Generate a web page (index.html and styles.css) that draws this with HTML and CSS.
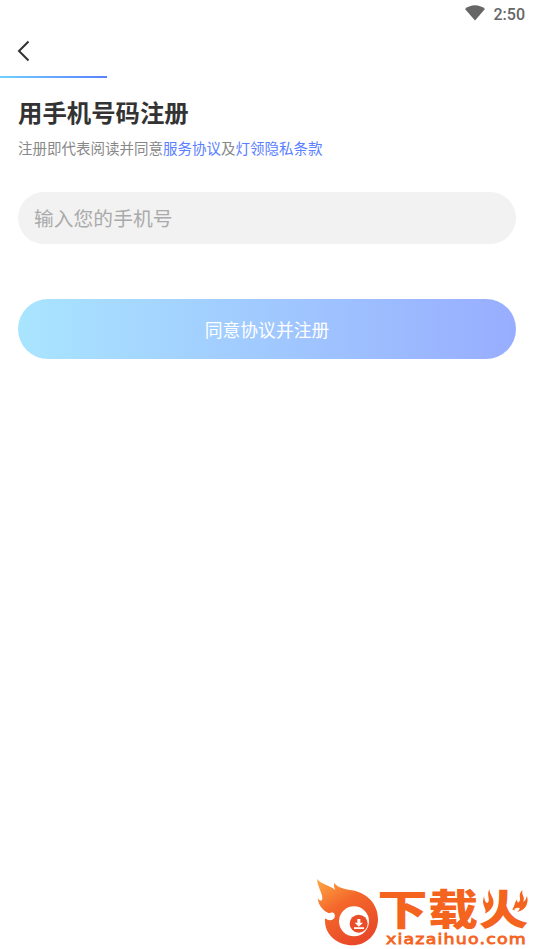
FILE: index.html
```html
<!DOCTYPE html>
<html lang="zh-CN">
<head>
    <meta charset="UTF-8">
    <meta name="viewport" content="width=device-width, initial-scale=1.0">
    <title>用手机号码注册</title>
    <link rel="stylesheet" href="styles.css">
</head>
<body>
    <div class="status-bar">
        <svg class="wifi" viewBox="0 0 20 16" width="20" height="16">
            <path d="M0 4 C6 -1 14 -1 20 4 L10 15.5 Z" fill="#666"/>
        </svg>
        <span class="time">2:50</span>
    </div>

    <nav>
        <a class="back" href="#" aria-label="返回">
            <svg viewBox="0 0 12 22" width="12" height="22">
                <path d="M11.500 1.500 L2 11 L11.500 20.500" fill="none" stroke="#333" stroke-width="2"/>
            </svg>
        </a>
    </nav>
    <div class="progress"></div>

    <main class="content">
        <h1>用手机号码注册</h1>
        <p class="terms">注册即代表阅读并同意<a href="#">服务协议</a>及<a href="#">灯领隐私条款</a></p>
        <form>
            <input type="tel" class="phone" placeholder="输入您的手机号">
            <button type="button" class="submit">同意协议并注册</button>
        </form>
    </main>

    <footer>
        <svg class="watermark" viewBox="0 0 224 79" width="224" height="79">
            <defs>
                <linearGradient id="flame" x1="0" y1="0" x2="0.55" y2="1">
                    <stop offset="0" stop-color="#fdaa45"/>
                    <stop offset="0.45" stop-color="#f4682b"/>
                    <stop offset="1" stop-color="#e94928"/>
                </linearGradient>
            </defs>
            <!-- fireball -->
            <g transform="scale(0.33333)">
                <path d="M21 27 C34 43 54 43 76 60 C72 52 71 46 73 38 C82 53 101 56 125 61 C176 69 204 107 204 147 C204 193 169 226 127 226 C83 226 46 196 45 154 C43 140 49 148 52 149 C66 154 79 145 73 132 C71 128 67 127 62 131 C45 127 25 110 23 84 C28 92 33 93 36 90 C42 76 23 55 21 27 Z" fill="url(#flame)"/>
                <path d="M44 136 C48 143 53 148 62 146 C68 145 73 140 73 133 C73 128 68 126 62 128 C53 130 47 131 44 136 Z" fill="#fff"/>
                <circle cx="132" cy="154" r="45" fill="#fff"/>
                <circle cx="146" cy="161" r="27" fill="#ea4e29"/>
                <path d="M142 147 H151 V158 H159 L146.500 170 L134 158 H142 Z M132 172 H162 V177 H132 Z" fill="#fff"/>
            </g>
            <text class="brand" transform="translate(67.500 54.700) scale(1 0.83)" textLength="151">下载火</text>
            <!-- flames on the last character -->
            <path d="M171 19 H187 V38 L183 44 H171 Z M203.500 19 H220 V43 H206 L203.500 37 Z" fill="#fff"/>
            <path d="M179.500 19 C179 24 184 27 183.500 33 C183 38 179 42 175 43.500 C177 39 173 37 173 31 L174 26 C174.500 30 175.500 33 177.500 33 C181 30 176 25 179.500 19 Z" fill="#f5641f"/>
            <path d="M212.500 20 C211 25 216 28 213 31.500 C216 31 216 28 217 26 C219 33 216 40 207 42 C211 39 210 37 207 38 L203 39 C205 34 205 32 207 29.500 C207 32 208 33 209 32 C212 29 207 25 212.500 20 Z" fill="#f5641f"/>
            <text class="domain" x="76" y="73.500" textLength="141" lengthAdjust="spacingAndGlyphs">xiazaihuo.com</text>
        </svg>
    </footer>
</body>
</html>
```

FILE: styles.css
```css
* {
    box-sizing: border-box;
}
body {
    font-family: "Noto Sans CJK SC", sans-serif;
    margin: 0;
    min-height: 949px;
    background-color: #fff;
    color: #333;
    display: flex;
    flex-direction: column;
}
.status-bar {
    height: 28px;
    padding-right: 9px;
    display: flex;
    align-items: center;
    justify-content: flex-end;
    gap: 9px;
}
.wifi {
    display: block;
    margin-bottom: 2px;
}
.time {
    font-family: Roboto, sans-serif;
    font-size: 16px;
    font-weight: 500;
    line-height: 26px;
    padding-top: 2px;
    color: #666;
}
nav {
    height: 48px;
    padding: 12px 17px;
}
.back {
    display: inline-block;
}
.back svg {
    display: block;
}
.progress {
    width: 107px;
    height: 2px;
    background: linear-gradient(to right, #70d0ff, #5a80ff);
}
.content {
    padding: 16px 18px;
}
h1 {
    margin: 0;
    font-size: 24.4px;
    line-height: 36px;
    font-weight: bold;
}
.terms {
    margin: 7px 0 33px;
    font-size: 14.5px;
    line-height: 22px;
    color: #888;
}
.terms a {
    color: #5a80ff;
    text-decoration: none;
}
.phone,
.submit {
    display: block;
    width: 100%;
    border: none;
    font-family: inherit;
}
.phone {
    height: 52px;
    padding: 0 16px 2px;
    border-radius: 26px;
    background-color: #f2f2f2;
    font-size: 19.8px;
    outline: none;
}
.phone::placeholder {
    color: #aaa;
}
.submit {
    height: 60px;
    margin-top: 55px;
    border-radius: 30px;
    background: linear-gradient(to right, #a9e5ff, #98adff);
    color: #fff;
    font-size: 17.8px;
    cursor: pointer;
}
footer {
    height: 79px;
    margin-top: auto;
    display: flex;
    justify-content: flex-end;
}
.watermark {
    display: block;
}
.brand {
    font-size: 50px;
    font-weight: 900;
    fill: #f5641f;
}
.domain {
    font-family: "DejaVu Sans", sans-serif;
    font-size: 14.5px;
    letter-spacing: 1px;
    fill: #f5641f;
    stroke: #f5641f;
    stroke-width: 0.8;
}
```
